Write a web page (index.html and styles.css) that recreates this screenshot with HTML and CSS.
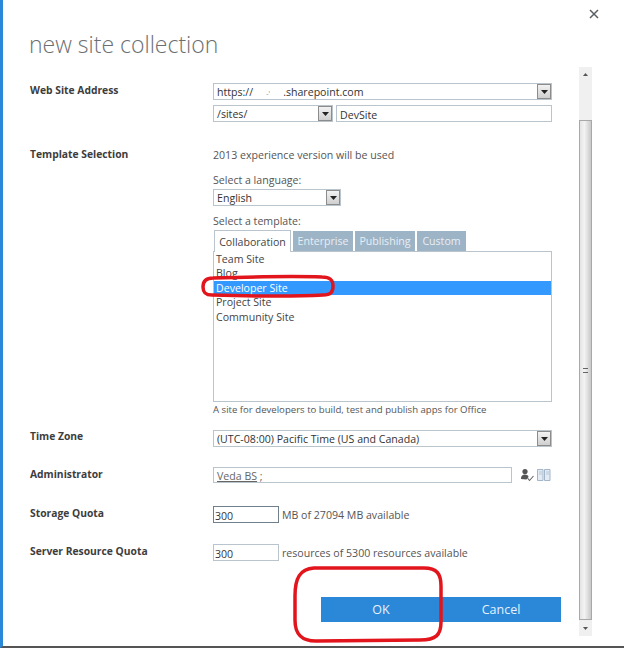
FILE: index.html
```html
<!DOCTYPE html>
<html lang="en">
<head>
<meta charset="utf-8">
<title>new site collection</title>
<link rel="stylesheet" href="styles.css">
</head>
<body>
<div class="dialog">
  <button class="close" aria-label="Close"><svg width="10" height="10" viewBox="0 0 10 10"><path d="M1 1L9 9M9 1L1 9" stroke="#5a5f63" stroke-width="1.5" fill="none"/></svg></button>
  <h1 class="title">new site collection</h1>
  <div class="body">
    <div class="form">
      <section class="row row-address">
        <div class="label">Web Site Address</div>
        <div class="fields">
          <div class="select full"><span class="value">https://<span class="redact">-'</span>.sharepoint.com</span><span class="arrow"><svg width="7" height="4" viewBox="0 0 7 4"><path d="M0 0H7L3.5 4Z" fill="#222"/></svg></span></div>
          <div class="pair">
            <div class="select path"><span class="value">/sites/</span><span class="arrow"><svg width="7" height="4" viewBox="0 0 7 4"><path d="M0 0H7L3.5 4Z" fill="#222"/></svg></span></div>
            <div class="input grow">DevSite</div>
          </div>
        </div>
      </section>
      <section class="row row-template">
        <div class="label">Template Selection</div>
        <div class="fields">
          <div class="note">2013 experience version will be used</div>
          <div class="note lang-label">Select a language:</div>
          <div class="select lang"><span class="value">English</span><span class="arrow"><svg width="7" height="4" viewBox="0 0 7 4"><path d="M0 0H7L3.5 4Z" fill="#222"/></svg></span></div>
          <div class="note tmpl-label">Select a template:</div>
          <div class="tabs">
            <span class="tab active">Collaboration</span>
            <span class="tab t-ent">Enterprise</span>
            <span class="tab t-pub">Publishing</span>
            <span class="tab t-cus">Custom</span>
          </div>
          <ul class="list">
            <li>Team Site</li>
            <li>Blog</li>
            <li class="selected">Developer Site</li>
            <li>Project Site</li>
            <li>Community Site</li>
          </ul>
          <div class="note desc">A site for developers to build, test and publish apps for Office</div>
        </div>
      </section>
      <section class="row row-zone">
        <div class="label">Time Zone</div>
        <div class="fields">
          <div class="select full"><span class="value">(UTC-08:00) Pacific Time (US and Canada)</span><span class="arrow"><svg width="7" height="4" viewBox="0 0 7 4"><path d="M0 0H7L3.5 4Z" fill="#222"/></svg></span></div>
        </div>
      </section>
      <section class="row row-admin">
        <div class="label">Administrator</div>
        <div class="fields admin">
          <div class="input people"><span class="person">Veda BS</span><span>&nbsp;;</span></div>
          <svg class="ico-check" width="14" height="14" viewBox="0 0 14 14"><circle cx="5" cy="3.500" r="2.600" fill="#555"/><path d="M1 11C1 7.500 3 6.500 5 6.500S8.500 7.500 8.500 9L6.500 11.500Z" fill="#555"/><path d="M7.500 10L9.500 12.500L13.500 8" stroke="#666" stroke-width="1.100" fill="none"/></svg>
          <svg class="ico-book" width="14" height="12" viewBox="0 0 14 12"><path d="M.5.500H6V11.500H.5ZM7.500.500H13V11.500H7.500Z" fill="#e3ecf5" stroke="#a3b6c9"/><path d="M2 3H5M2 5H5M9 3H12M9 5H12" stroke="#b5c6d6"/></svg>
        </div>
      </section>
      <section class="row row-storage">
        <div class="label">Storage Quota</div>
        <div class="fields quota">
          <div class="input num dark">300</div>
          <span class="note">MB of 27094 MB available</span>
        </div>
      </section>
      <section class="row row-server">
        <div class="label">Server Resource Quota</div>
        <div class="fields quota">
          <div class="input num">300</div>
          <span class="note">resources of 5300 resources available</span>
        </div>
      </section>
      <div class="actions">
        <button class="btn ok">OK</button>
        <button class="btn cancel">Cancel</button>
      </div>
    </div>
    <div class="scrollbar">
      <div class="sb-track"><svg width="5" height="3" viewBox="0 0 5 3"><path d="M0 3H5L2.500 0Z" fill="#555"/></svg></div>
      <div class="sb-thumb"><span class="grip"></span></div>
      <div class="sb-end"><svg width="5" height="3" viewBox="0 0 5 3"><path d="M0 0H5L2.500 3Z" fill="#555"/></svg></div>
    </div>
  </div>
  <svg class="marks" width="624" height="648" viewBox="0 0 624 648">
    <path d="M213 278C245 277 295 276 322 277C331 277 333 281 333 286C333 292 331 295 323 295C290 297 245 296 212 295C205 295 203 292 203 287C203 281 206 278 213 278Z" fill="none" stroke="#e2141c" stroke-width="3.500"/>
    <path d="M314 568H424C437 568 441 574 441 586V622C441 635 436 640 420 640L316 641C301 641 295 634 295 620V596C295 578 300 569 314 568Z" fill="none" stroke="#e2141c" stroke-width="3.500"/>
  </svg>
</div>
</body>
</html>
```

FILE: styles.css
```css
* { box-sizing: border-box; }
html, body { margin: 0; padding: 0; }
body {
  width: 624px;
  height: 648px;
  overflow: hidden;
  background: #fff;
  font-family: "Open Sans", "Noto Sans", sans-serif;
  font-size: 10.6px;
  color: #444;
}
.dialog {
  position: relative;
  width: 624px;
  height: 648px;
  border-left: 3px solid #2b88d8;
  border-bottom: 2px solid #555;
  padding-left: 27px;
}
.close {
  position: absolute;
  top: 9px;
  left: 586px;
  width: 10px;
  height: 10px;
  padding: 0;
  border: 0;
  background: none;
  display: flex;
}
.title {
  margin: 0 0 0 -1px;
  padding-top: 29px;
  height: 67px;
  font-size: 23px;
  line-height: 30px;
  font-weight: 300;
  color: #6b6f72;
}
.body {
  display: flex;
  gap: 27px;
  align-items: flex-start;
}
.form { width: 522px; }
.row {
  display: grid;
  grid-template-columns: 183px 339px;
}
.label {
  font-size: 10.3px;
  font-weight: 700;
  color: #3d3d3d;
  line-height: 14px;
}
.fields { min-width: 0; }
.row-address { padding-top: 16px; }
.row-template { padding-top: 26px; }
.row-template .label { margin-top: -1px; }
.row-zone { padding-top: 13px; }
.row-zone .label { margin-top: -1px; }
.row-admin { padding-top: 20px; }
.row-storage { padding-top: 23px; }
.row-server { padding-top: 21px; }
.select, .input {
  display: flex;
  align-items: center;
  height: 17px;
  border: 1px solid #b9c4cd;
  background: #fff;
  color: #333;
  padding-left: 3px;
  line-height: 15px;
  white-space: nowrap;
}
.input { padding-top: 3px; }
.value { padding-top: 2px; }
.redact {
  display: inline-block;
  width: 30px;
  font-size: 7px;
  text-align: center;
  color: #888;
}
.select { justify-content: space-between; padding-right: 0; }
.arrow {
  width: 14px;
  height: 15px;
  display: flex;
  align-items: center;
  justify-content: center;
  background: linear-gradient(#f2f2f2, #cfcfcf);
  border: 1px solid #8c8c8c;
}
.pair { display: flex; gap: 3px; margin-top: 5px; }
.path { width: 120px; }
.grow { flex: 1; }
.note { line-height: 14px; color: #555; }
.lang-label { margin-top: 11px; }
.lang { width: 128px; margin-top: 2px; }
.tmpl-label { margin-top: 8px; }
.tabs { display: flex; height: 21px; margin-top: 2px; padding-left: 1px; gap: 2px; align-items: flex-end; }
.tab {
  height: 20px;
  line-height: 21px;
  text-align: center;
  background: #9db3c6;
  color: #e8eef3;
}
.tab.active {
  width: 77px;
  height: 22px;
  background: #fff;
  color: #444;
  border: 1px solid #b9c4cd;
  border-bottom: 0;
  margin-bottom: -1px;
  line-height: 22px;
  position: relative;
}
.t-ent { width: 60px; }
.t-pub { width: 60px; }
.t-cus { width: 49px; }
.list {
  list-style: none;
  margin: 0;
  padding: 0;
  height: 151px;
  border: 1px solid #b9c4cd;
}
.list li { height: 14.4px; line-height: 14.4px; padding-left: 2px; color: #444; }
.list li.selected { background: #3399ff; color: #fff; }
.desc { margin-top: 1px; font-size: 9.6px; }
.admin { display: flex; align-items: center; }
.people { width: 299px; height: 16px; color: #666; }
.person { text-decoration: underline; }
.ico-check { margin-left: 8px; }
.ico-book { margin-left: 3px; }
.quota { display: flex; align-items: center; gap: 3px; }
.num { width: 66px; padding-left: 1px; }
.dark { border-color: #6f7f8c; }
.actions {
  display: flex;
  justify-content: flex-end;
  margin: 36px -9px 0 0;
}
.btn {
  height: 25px;
  border: 0;
  padding: 0;
  background: #2b88d8;
  color: #e6f1fb;
  font: inherit;
  font-size: 12.5px;
}
.ok { width: 120px; }
.cancel { width: 120px; }
.scrollbar {
  width: 13px;
  height: 569px;
  display: flex;
  flex-direction: column;
  background: #f0f0f0;
}
.sb-track {
  height: 53px;
  display: flex;
  justify-content: center;
  padding-top: 6px;
}
.sb-thumb {
  height: 500px;
  background: linear-gradient(90deg, #e4e4e4, #f3f3f3 40%, #c9c9c9);
  border: 1px solid #a8a8a8;
  display: flex;
  align-items: center;
  justify-content: center;
}
.grip { width: 5px; height: 5px; border-top: 1px solid #666; border-bottom: 1px solid #666; }
.sb-end { flex: 1; display: flex; justify-content: center; align-items: center; }
.marks { position: absolute; left: -3px; top: 0; pointer-events: none; }
```
